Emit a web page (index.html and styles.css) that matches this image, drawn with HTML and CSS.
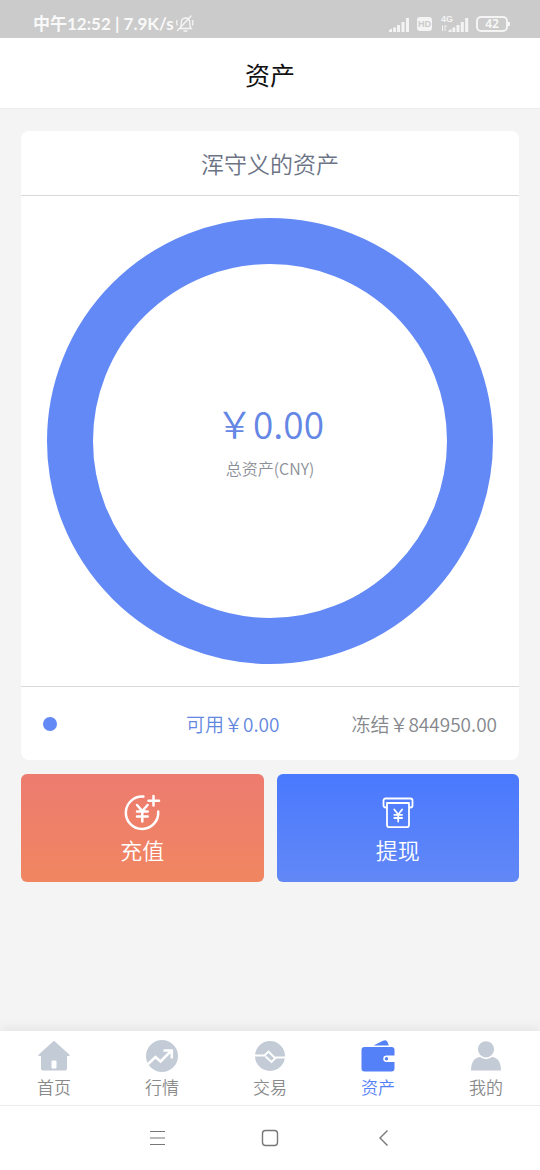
FILE: index.html
```html
<!DOCTYPE html>
<html lang="zh-CN">
<head>
<meta charset="utf-8">
<meta name="viewport" content="width=device-width, initial-scale=1">
<title>资产</title>
<link rel="stylesheet" href="styles.css">
</head>
<body>
<div class="statusbar">
  <span class="status-time">中午12:52 | 7.9K/s</span>
  <svg class="bell" width="18" height="18" viewBox="0 0 18 18" fill="none" stroke="#f6f6f6" stroke-width="1.3" stroke-linecap="round"><path d="M4 13.5c1-1 1.200-2 1.200-5C5.200 5 6.500 3 9.500 3s4.300 2 4.300 5c0 3 .2 4.500 1.200 5.500zM8 16h3M1 5.500C.5 7 .6 8.500 1.200 10M16.500 5.500c.6 1.500.5 3 0 4.500M1.500 15.500 15 1"/></svg>
  <div class="status-right">
    <svg width="21" height="17" viewBox="0 0 21 17" fill="#f4f4f4"><path d="M0 14l3-1.500V16H0zM4.200 11.500h2.800V16H4.200zM8 9h3v7H8zM12.500 6h3v10h-3zM17 2h3v14h-3z"/></svg>
    <span class="hd">HD</span>
    <svg width="29" height="20" viewBox="0 0 29 20" fill="#f4f4f4"><text class="net" x="1" y="8">4G</text><path d="M8.500 16.500l3-1.500v3h-3zM12.500 13.500h2.800V18h-2.800zM16.500 11h3v7h-3zM20.800 8h3v10h-3zM25.200 4h3v14h-3zM2 11.500h1V17H2zM4.500 11.500h2.500v1H5.500V17h-1z"/></svg>
    <div class="battery">42</div>
  </div>
</div>
<header class="header"><h1 class="title">资产</h1></header>
<main class="main">
  <section class="card">
    <h2 class="card-title">浑守义的资产</h2>
    <div class="chart">
      <div class="ring">
        <div class="total">￥0.00</div>
        <div class="total-label">总资产(CNY)</div>
      </div>
    </div>
    <div class="legend">
      <span class="dot"></span>
      <span class="available">可用￥0.00</span>
      <span class="frozen">冻结￥844950.00</span>
    </div>
  </section>
  <div class="actions">
    <button class="action deposit" type="button">
      <svg width="38" height="38" viewBox="0 0 38 38" fill="none" stroke="#fff" stroke-width="2.500" stroke-linecap="round"><path d="M20.500 3.600A16.200 16.200 0 1 0 35.200 18.500M30.500 3v9.500M25.500 7.800H36M14 12l5.300 6 5.300-6M14 18.500h10.700M14 23.500h10.700M19.300 18v10.500"/></svg>
      <span>充值</span>
    </button>
    <button class="action withdraw" type="button">
      <svg width="38" height="38" viewBox="0 0 38 38" fill="none" stroke="#fff" stroke-width="1.800" stroke-linejoin="round" stroke-linecap="round"><path d="M7.800 14.500H6.500a2 2 0 0 1-2-2V7.500a2 2 0 0 1 2-2h25a2 2 0 0 1 2 2v5a2 2 0 0 1-2 2h-1.300M8 10h22V32a2.200 2.200 0 0 1-2.200 2.200H10.200A2.200 2.200 0 0 1 8 32zM15.300 16.500l3.900 5 3.900-5M15.300 21.800h7.800M15.300 25h7.800M19.200 21.500v7"/></svg>
      <span>提现</span>
    </button>
  </div>
</main>
<nav class="tabs">
  <a class="tab" href="#home">
    <svg width="34" height="34" viewBox="0 0 34 34" fill="#c3ccd6"><path d="M16.100 1.500q.9-.8 1.800 0L32.500 14.800q.8 1.200-.7 1.200H30v12.500a2 2 0 0 1-2 2H6a2 2 0 0 1-2-2V16H2.200q-1.500 0-.7-1.200z"/><rect x="14.500" y="20.500" width="5" height="8" rx="1" fill="#fff"/></svg>
    <span>首页</span>
  </a>
  <a class="tab" href="#market">
    <svg width="34" height="34" viewBox="0 0 34 34"><circle cx="17" cy="16" r="16" fill="#c3ccd6"/><path d="M2.500 24.500 10.500 17l5 4.500L26 11M18.500 10.500h8.300v8" fill="none" stroke="#fff" stroke-width="2.500"/></svg>
    <span>行情</span>
  </a>
  <a class="tab" href="#trade">
    <svg width="34" height="34" viewBox="0 0 34 34"><circle cx="17" cy="16" r="15" fill="#c3ccd6"/><path d="M1 15.500h10.500L15.500 11.500l6 6M12.500 16.500l6 5.500 4.500-4.500H33" fill="none" stroke="#fff" stroke-width="1.900"/></svg>
    <span>交易</span>
  </a>
  <a class="tab active" href="#assets">
    <svg width="34" height="34" viewBox="0 0 34 34" fill="#5480f8"><path d="M12.500 5.500 22 .7q3.500-1.300 4.500 1.300l1.300 3.500zM3.500 7h27a3 3 0 0 1 3 3v5.500H25.500a3.200 3.200 0 0 0 0 6.500h8v6.500a3 3 0 0 1-3 3h-27a3 3 0 0 1-3-3V10a3 3 0 0 1 3-3z"/><circle cx="25.500" cy="18.700" r="1.700"/></svg>
    <span>资产</span>
  </a>
  <a class="tab" href="#me">
    <svg width="34" height="34" viewBox="0 0 34 34" fill="#c3ccd6"><path d="M2 30.500c0-8 3-12.500 8.500-13.500h13C29 18 32 22.500 32 30.500z"/><circle cx="17" cy="9.300" r="9" stroke="#fff" stroke-width="1.800"/></svg>
    <span>我的</span>
  </a>
</nav>
<footer class="sysnav">
  <button class="sysbtn" type="button" aria-label="菜单"><svg width="18" height="18" viewBox="0 0 18 18" fill="none" stroke="#777" stroke-width="1.200"><path d="M2 2.500h15M2 9h15M2 15.500h15"/></svg></button>
  <button class="sysbtn" type="button" aria-label="主屏幕"><svg width="18" height="18" viewBox="0 0 18 18" fill="none" stroke="#777" stroke-width="1.400"><rect x="1.500" y="1.500" width="15" height="15" rx="3"/></svg></button>
  <button class="sysbtn" type="button" aria-label="返回"><svg width="18" height="18" viewBox="0 0 18 18" fill="none" stroke="#777" stroke-width="1.400"><path d="M13.500 1.500 6 9l7.500 7.500"/></svg></button>
</footer>
</body>
</html>
```
FILE: styles.css
```css
* { box-sizing: border-box; }
body {
  margin: 0;
  min-height: 100vh;
  display: flex;
  flex-direction: column;
  background: #f4f4f4;
  font-family: "Noto Sans CJK SC", sans-serif;
  font-weight: 350;
}
.statusbar {
  display: flex;
  align-items: center;
  height: 38px;
  padding: 10px 32px 0 33px;
  background: #cbcbcb;
  color: #f9f9f9;
}
.status-time {
  font: 700 17px/24px Lato, "Noto Sans CJK SC", sans-serif;
}
.bell { margin-left: 2px; }
.status-right {
  display: flex;
  align-items: center;
  margin-left: auto;
}
.hd {
  margin: 0 8px 0 7px;
  padding: 0 1px;
  border-radius: 3px;
  background: #f4f4f4;
  color: #cbcbcb;
  font: 700 9px/14px "Liberation Sans", sans-serif;
}
.net { font: 700 9px "Liberation Sans", sans-serif; }
.battery {
  position: relative;
  width: 32px;
  height: 16px;
  margin-left: 7px;
  border: 2px solid #f4f4f4;
  border-radius: 5px;
  text-align: center;
  font: 600 12px/12px "Noto Sans", sans-serif;
}
.battery::after {
  content: "";
  position: absolute;
  right: -4px;
  top: 4px;
  width: 2px;
  height: 4px;
  background: #f4f4f4;
}
.header {
  height: 71px;
  background: #fff;
  border-bottom: 1px solid #ececec;
}
.title {
  margin: 0;
  text-align: center;
  color: #111;
  font-size: 25px;
  font-weight: 400;
  line-height: 72px;
}
.main {
  flex: 1;
  padding: 22px 21px;
}
.card {
  background: #fff;
  border-radius: 8px;
}
.card-title {
  margin: 0;
  text-align: center;
  color: #6b7385;
  font-size: 23px;
  font-weight: 350;
  line-height: 64px;
}
.chart {
  padding: 22px 26px;
  border-top: 1px solid #d8d9db;
  border-bottom: 1px solid #d8d9db;
}
.ring {
  display: flex;
  flex-direction: column;
  align-items: center;
  justify-content: center;
  aspect-ratio: 1;
  border: 46px solid #6289f6;
  border-radius: 50%;
}
.total {
  color: #6486e4;
  font-size: 37px;
  line-height: 54px;
}
.total-label {
  color: #8b8f98;
  font-size: 16px;
  line-height: 36px;
}
.legend {
  display: flex;
  align-items: center;
  gap: 72px;
  height: 73px;
  padding: 0 22px;
  font-size: 19px;
}
.dot {
  width: 14px;
  height: 14px;
  border-radius: 50%;
  background: #6289f6;
}
.available {
  margin-left: auto;
  color: #6488e0;
}
.frozen { color: #85878d; }
.actions {
  display: grid;
  grid-template-columns: 1fr 1fr;
  gap: 13px;
  margin-top: 14px;
}
.action {
  display: flex;
  flex-direction: column;
  align-items: center;
  height: 108px;
  padding: 19px 0 0;
  border: 0;
  border-radius: 6px;
  color: #fff;
  font: 350 22px/36px "Noto Sans CJK SC", sans-serif;
}
.deposit { background: linear-gradient(#ed7b70, #f08660); }
.withdraw { background: linear-gradient(#4a79fe, #6288f7); }
.tabs {
  display: grid;
  grid-template-columns: repeat(5, 1fr);
  height: 75px;
  padding-top: 9px;
  background: #fff;
  border-bottom: 1px solid #ececec;
  box-shadow: 0 -2px 12px rgba(0, 0, 0, 0.08);
}
.tab {
  display: flex;
  flex-direction: column;
  align-items: center;
  color: #8a8a8a;
  font-size: 17px;
  line-height: 26px;
  text-decoration: none;
}
.active { color: #5480f8; }
.sysnav {
  display: flex;
  align-items: center;
  justify-content: center;
  gap: 95px;
  height: 64px;
  background: #fff;
}
.sysbtn {
  display: flex;
  padding: 0;
  border: 0;
  background: none;
}
```
